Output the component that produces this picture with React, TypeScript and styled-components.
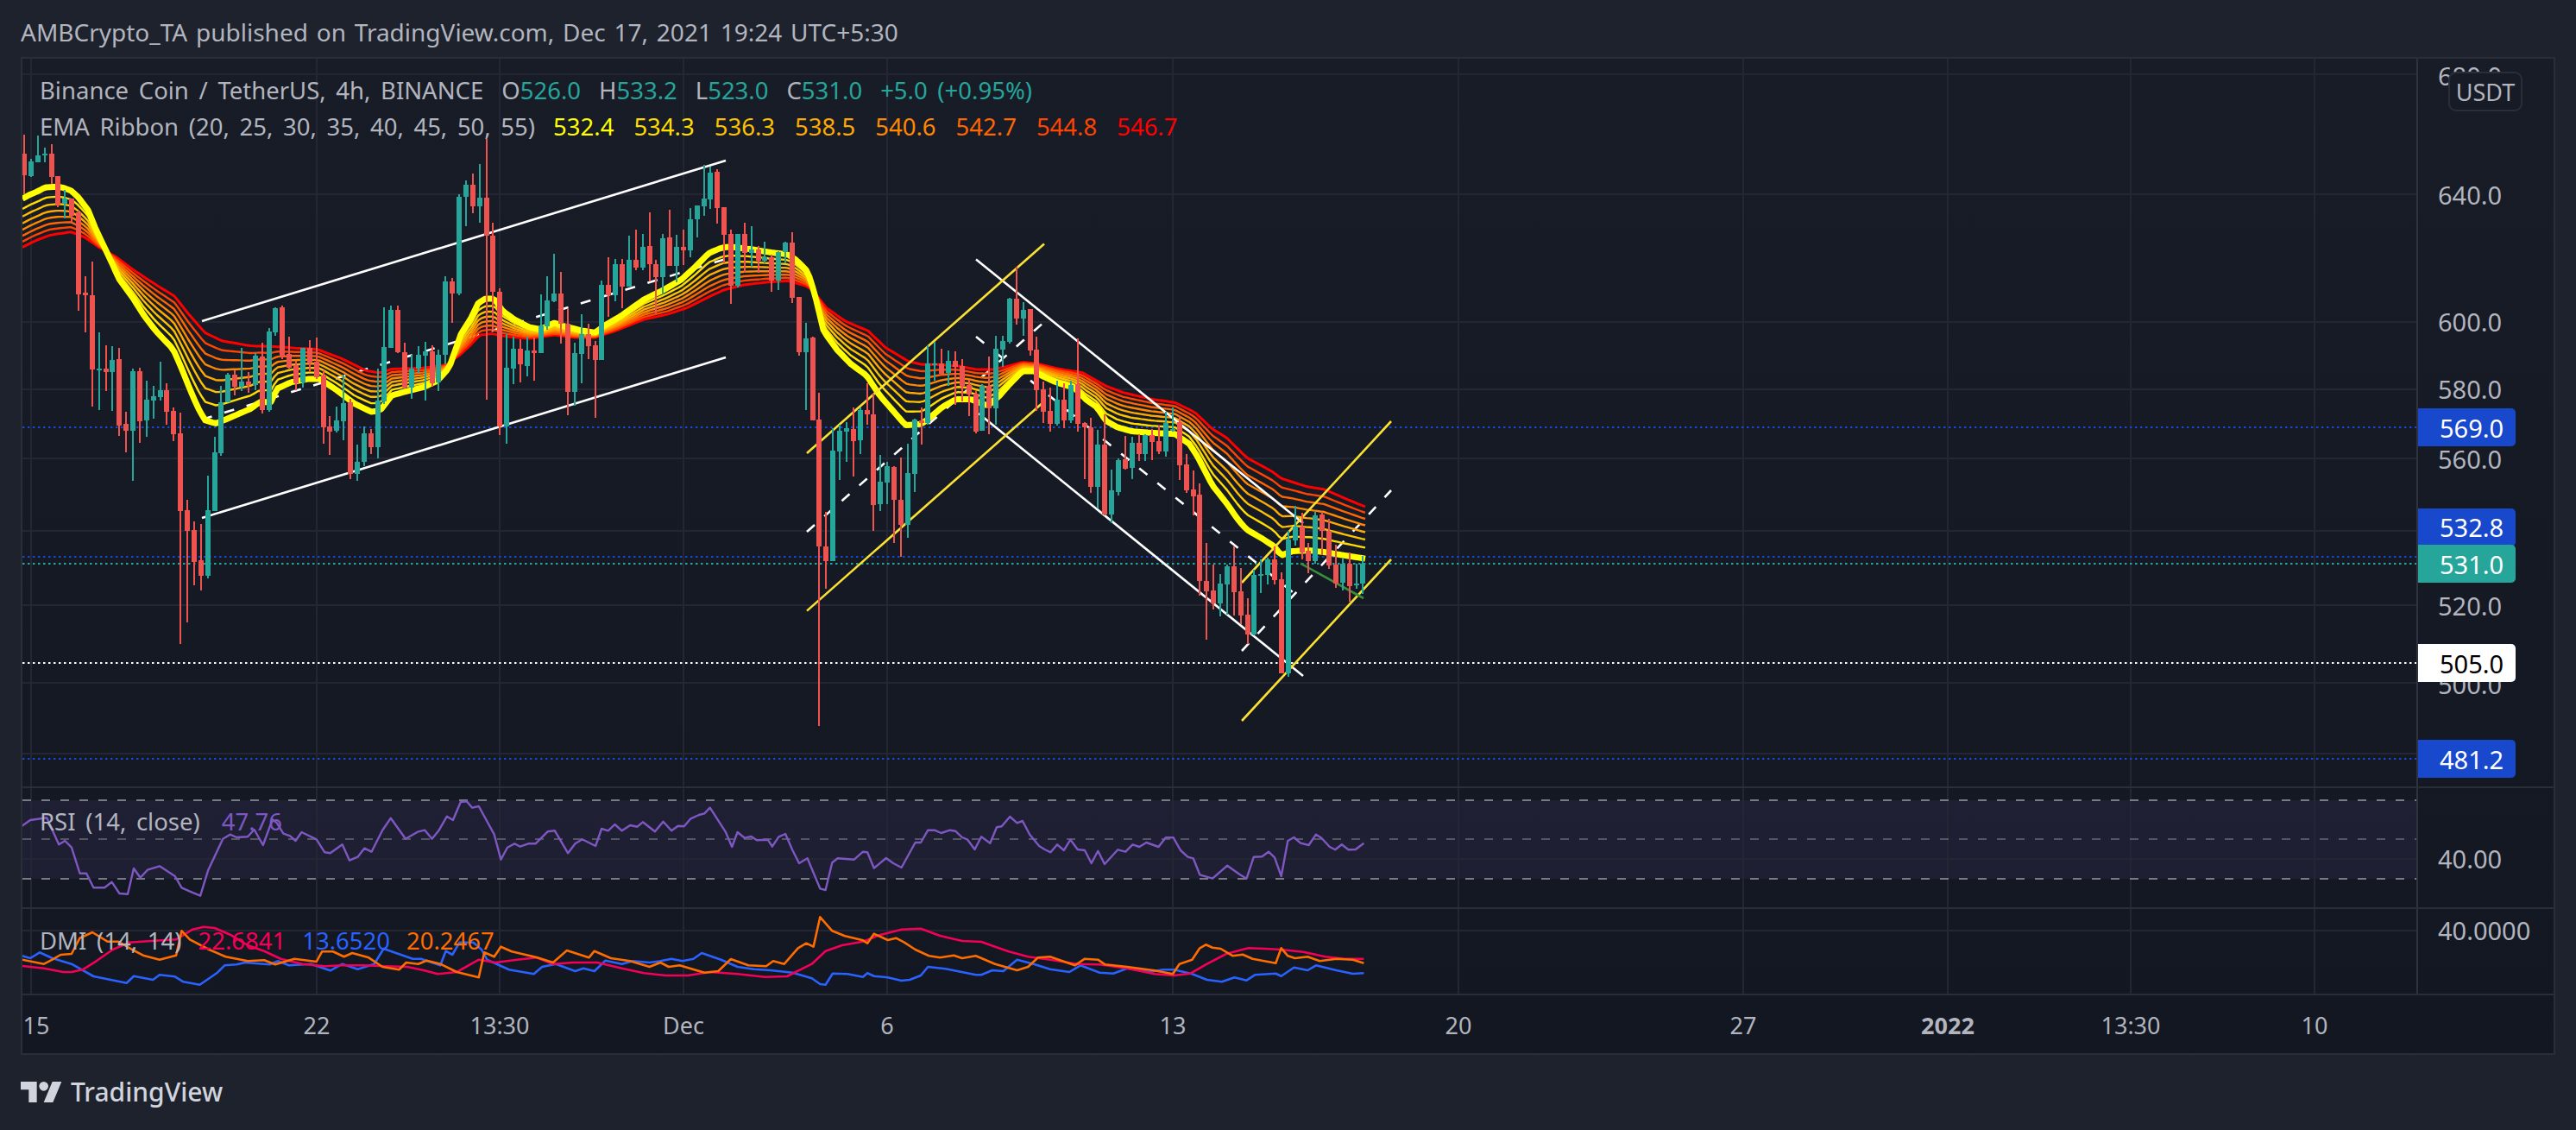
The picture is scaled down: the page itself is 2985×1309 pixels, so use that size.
import { createGlobalStyle, styled } from 'styled-components'

const GlobalStyle = createGlobalStyle`
  html, body {
    margin: 0;
    padding: 0;
    background: #1e222d;
  }
  body {
    font-family: "Noto Sans", "Open Sans", sans-serif;
    color: #b2b5be;
  }
`

type Pt = [number, number]
// hi, body top, body bottom, lo, 1 = up candle. Read off the chart in crop units.
type Candle = [number, number, number, number, number]

const UP = '#26a69a'
const DOWN = '#ef5350'
const BLUE = '#1848cc'
const YELLOW = '#fbe232'
const GRID = '#242733'

const PLOT_LEFT = 26
const PLOT_WIDTH = 2774

const crop = (pts: Pt[], ox: number, oy: number): Pt[] =>
  pts.map(([x, y]) => [ox + x / 3, oy + y / 2.613])

const zoomA = (pts: Pt[]): Pt[] => pts.map(([x, y]) => [x / 1.568, 900 + y / 3])
const zoomB = (pts: Pt[]): Pt[] => pts.map(([x, y]) => [1000 + x / 1.568, 900 + y / 3])

const toPoints = (pts: Pt[]) => pts.map(([x, y]) => `${x.toFixed(1)},${y.toFixed(1)}`).join(' ')

const candlesA: Candle[] = [
  [15,72,138,195,0],[90,97,142,145,1],[18,78,98,98,1],[55,72,78,100,1],[45,72,143,165,0],[140,140,228,235,0],
  [183,210,225,270,1],[208,208,260,285,0],[245,250,498,550,0],[445,494,502,615,0],[400,502,726,838,0],[615,723,727,848,1],
  [653,725,733,792,0],[657,698,733,851,1],[660,695,895,927,0],[855,892,912,976,0],[725,731,911,1063,1],[722,731,883,948,0],
  [760,818,880,930,1],[777,808,820,875,1],[703,790,810,820,1],[768,790,855,893,0],[842,852,922,942,0],[857,920,1155,1557,0],
  [1122,1152,1215,1491,0],[1185,1213,1309,1380,0],[1195,1304,1351,1395,0],[1048,1152,1352,1358,1],[930,977,1155,1155,1],[777,825,980,988,1],
  [738,741,825,825,1],[730,741,779,805,0],[662,764,779,792,1],[735,764,773,797,0],[678,685,773,788,1],[645,686,850,860,0],
  [600,612,850,855,1],[537,540,613,625,1],[532,537,687,695,0],[626,680,722,725,0],[700,713,768,788,0],[660,660,766,780,1],
  [638,660,708,735,0],[630,703,750,755,0],[730,745,902,950,0],[868,899,915,985,0],[838,881,912,916,1],[743,828,882,940,1],
  [815,826,1042,1057,0],[955,1005,1042,1063,1],[900,920,1005,1020,1],[908,920,962,983,0],[725,820,962,995,1],[538,659,824,830,1],
  [533,545,660,660,1],[533,545,674,678,0],[645,673,780,785,0],[682,725,780,815,1],[657,683,725,738,1],[642,672,685,820,1],
  [653,672,768,778,0],[667,683,765,793,1],[443,460,682,712,1],[450,460,497,585,0],[197,205,497,502,1],[155,168,205,293,1],
]

const candlesB: Candle[] = [
  [133,168,233,253,0],[105,206,233,282,1],[30,206,322,818,0],[283,322,490,610,0],[480,491,900,925,0],[620,722,898,950,1],
  [626,664,724,770,1],[635,664,712,765,0],[628,669,716,747,1],[630,669,677,760,0],[500,593,677,677,1],[445,517,597,607,1],
  [375,497,520,522,1],[432,497,587,648,0],[543,587,794,865,0],[645,677,794,835,1],[558,619,680,768,1],[588,619,656,695,0],
  [640,653,698,873,0],[457,471,697,697,1],[387,471,501,567,0],[392,408,501,520,1],[392,408,476,540,0],[322,395,476,476,1],
  [302,395,418,425,0],[317,355,418,425,1],[252,353,408,460,0],[395,408,447,557,0],[315,330,447,500,1],[243,327,413,413,0],
  [320,355,413,462,1],[302,355,365,410,0],[238,272,365,387,1],[230,230,273,327,1],[108,210,232,260,1],[112,130,211,240,1],
  [120,127,237,285,0],[235,235,319,405,0],[302,316,473,527,0],[315,315,473,478,1],[282,315,373,435,0],[292,362,373,415,1],
  [352,362,397,435,0],[340,388,398,405,1],[380,387,456,490,0],[368,372,456,485,1],[340,342,372,405,1],[312,342,510,525,0],
  [507,507,673,685,0],[586,632,673,848,1],[626,631,880,880,0],[798,878,1262,1806,0],[1158,1262,1307,1390,0],[905,972,1307,1307,1],
  [893,912,975,1060,1],[885,904,915,1005,1],[842,907,943,1050,0],[842,850,941,983,1],[768,850,861,893,0],[800,862,1136,1214,0],
  [985,1067,1134,1155,1],[1005,1020,1068,1135,1],[1018,1022,1120,1252,0],[993,1120,1197,1293,0],[952,1040,1197,1235,1],[875,878,1042,1097,1],
]

const candlesC: Candle[] = [
  [580,618,628,692,0],[392,447,628,632,1],[382,447,452,500,1],[403,447,478,483,0],[408,440,475,514,1],[410,440,457,572,0],
  [435,455,515,563,0],[497,512,540,605,0],[530,537,652,658,0],[510,515,650,650,1],[427,516,583,660,0],[363,403,583,632,1],
  [363,380,405,457,1],[247,250,382,388,1],[155,252,310,328,0],[262,285,310,362,1],[282,282,408,422,0],[366,405,527,590,0],
  [502,525,592,627,0],[520,591,630,652,0],[498,557,630,635,1],[508,557,618,642,0],[500,512,620,628,1],[372,510,630,652,0],
  [625,627,640,797,0],[612,640,820,840,0],[648,693,820,885,1],[602,693,903,908,0],[768,831,903,930,1],[735,740,835,847,1],
  [667,737,765,768,0],[670,687,764,797,1],[662,687,720,742,0],[660,665,720,742,1],[645,665,685,740,0],[635,682,713,722,0],
  [592,628,713,728,1],[580,646,650,652,1],[607,625,755,800,0],[720,753,832,840,0],[772,828,848,907,0],[810,845,1105,1150,0],
  [990,1105,1137,1282,0],[1055,1133,1172,1192,0],[1085,1113,1172,1213,1],[1055,1062,1115,1207,1],[1002,1062,1138,1210,0],[1067,1137,1210,1237,0],
  [1158,1207,1266,1297,0],[1072,1087,1268,1270,1],[1040,1085,1089,1142,1],[1035,1040,1087,1115,1],[1002,1040,1103,1115,0],[1078,1100,1385,1385,0],
  [955,980,1385,1395,1],[878,940,983,998,1],[900,940,1018,1040,0],[990,1015,1045,1082,0],[895,907,1045,1052,1],[897,903,955,1028,0],
  [918,953,1057,1068,0],[995,1055,1113,1125,0],[1038,1052,1110,1133,1],[1018,1052,1120,1167,0],[1052,1112,1118,1128,1],[1030,1052,1113,1145,1],
]

const candleY = (v: number, base: number) => base + v / 2.613

const candles = [
  ...candlesA.map((c) => ({ c, base: 150 })),
  ...candlesB.map((c) => ({ c, base: 150 })),
  ...candlesC.map((c) => ({ c, base: 250 })),
]

// EMA 20 and EMA 55 are read off the chart, the six between are fanned out from them
const ema20: Pt[] = [
  ...crop([[5,210],[30,198],[60,187],[85,175],[130,173],[150,177],[175,185],[200,205],[235,245],[260,300],[290,355],[315,400],[340,450],[390,510],[430,565],[470,610],[530,665],[560,725],[590,790],[615,840],[640,880],[680,890],[720,875],[800,845],[830,825],[870,825],[890,785],[940,765],[1000,755],[1040,755],[1100,790],[1160,830],[1220,855],[1250,850],[1290,805],[1330,795],[1400,780],[1450,760],[1490,720],[1530,620]], 24, 150),
  ...crop([[0,570],[25,525],[50,512],[80,512],[110,550],[150,575],[200,598],[240,605],[290,585],[320,595],[380,608],[430,615],[470,590],[520,565],[600,515],[670,485],[730,455],[780,415],[825,375],[870,358],[900,355],[970,362],[1040,372],[1100,378],[1130,395],[1170,430],[1195,500],[1225,610],[1270,665],[1320,710],[1375,745],[1420,805],[1470,855],[1510,895]], 546, 150),
  ...crop([[0,630],[30,610],[70,580],[120,555],[170,555],[230,575],[270,545],[300,515],[350,470],[390,470],[420,485],[470,505],[530,520],[570,555],[610,580],[640,620],[680,640],[730,652],[800,657],[880,660],[930,690],[960,730],[1010,815],[1060,870],[1100,920],[1130,950],[1180,975],[1225,1000],[1250,1028],[1290,1015],[1350,1013],[1400,1018],[1470,1028],[1545,1038]], 1068, 250),
]

const ema55: Pt[] = [
  ...crop([[5,357],[50,337],[100,320],[175,310],[220,325],[270,355],[330,385],[400,430],[470,470],[535,505],[580,555],[640,615],[700,640],[800,655],[880,657],[960,662],[1030,665],[1120,695],[1200,730],[1250,737],[1290,725],[1400,722],[1480,712],[1530,680]], 24, 150),
  ...crop([[0,650],[30,622],[70,618],[110,625],[200,633],[290,622],[360,630],[430,630],[500,610],[600,575],[680,560],[750,540],[830,505],[880,485],[950,470],[1030,462],[1100,458],[1170,475],[1195,495],[1235,540],[1300,580],[1380,610],[1440,660],[1520,702]], 546, 150),
  ...crop([[0,450],[60,450],[130,455],[190,465],[250,465],[300,455],[350,443],[400,447],[470,462],[560,475],[640,515],[700,535],[800,555],[880,565],[950,595],[1010,645],[1060,672],[1130,732],[1220,775],[1250,795],[1340,820],[1400,828],[1470,855],[1540,880]], 1068, 250),
]

const ribbonColors = ['#ffff00', '#ffdd00', '#fcc200', '#ffaa00', '#ff8800', '#ff6600', '#ff4400', '#ff0000']

const sampleAt = (curve: Pt[], x: number) => {
  if (x <= curve[0][0]) return curve[0][1]
  for (let i = 1; i < curve.length; i++) {
    if (x <= curve[i][0]) {
      const [x0, y0] = curve[i - 1]
      const [x1, y1] = curve[i]
      return y0 + ((x - x0) / (x1 - x0)) * (y1 - y0)
    }
  }
  return curve[curve.length - 1][1]
}

const ribbon = ribbonColors.map((color, k) => {
  const t = Math.pow(k / 7, 0.8)
  const pts: Pt[] = []
  for (let x = 26; x <= 1584; x += 4) {
    const a = sampleAt(ema20, x)
    const b = sampleAt(ema55, x)
    pts.push([x, a + (b - a) * t])
  }
  return { color, width: k === 0 ? 7 : k === 7 ? 3 : 2.4, points: toPoints(pts) }
}).reverse()

type Seg = [number, number, number, number]

const dashedChannels: Seg[] = [
  [234, 486, 841, 300],
  [935, 616, 1210, 373],
  [1131, 390, 1508, 694],
  [1439, 754, 1612, 568],
]

const whiteChannels: Seg[] = [
  [234, 372, 841, 186],
  [234, 600, 841, 414],
  [1131, 300.5, 1510, 606],
  [1134, 479, 1510, 783],
]

const yellowChannels: Seg[] = [
  [935, 525, 1210, 282.5],
  [935, 707.6, 1210, 465],
  [1439, 675, 1612, 488],
  [1439, 835, 1612, 648],
]

const priceLines = [
  { y: 495, color: BLUE },
  { y: 645, color: BLUE },
  { y: 653, color: UP },
  { y: 768, color: '#ffffff' },
  { y: 879, color: BLUE },
]

const verticalGrid = [36, 367, 579, 792, 1028, 1359, 1690, 2020, 2257, 2469, 2682]
const mainGrid = [86, 225, 373, 451, 531, 615, 701, 791, 873]

const rsiLine: Pt[] = [
  ...zoomA([[40,170],[55,150],[85,142],[107,235],[118,222],[130,245],[145,335],[157,335],[170,385],[190,385],[203,365],[217,405],[232,407],[243,318],[255,350],[268,323],[290,310],[318,345],[330,385],[345,398],[364,413],[378,325],[405,215],[418,200],[430,210],[450,208],[462,183],[478,237],[495,148],[503,160],[515,197],[527,205],[537,222],[548,192],[575,217],[590,262],[600,265],[622,235],[635,290],[650,278],[662,248],[675,260],[695,185],[710,143],[737,215],[760,190],[772,185],[785,215],[797,187],[812,137],[823,150],[837,87],[848,85],[858,107],[870,102],[898,200],[910,287],[922,245],[935,232],[945,242],[960,232],[973,232],[995,190],[1008,187],[1032,265],[1045,232],[1058,217],[1082,240],[1093,180],[1105,187],[1117,165],[1130,187],[1145,168],[1158,173],[1168,157],[1190,190],[1205,155],[1220,187],[1232,170],[1243,172],[1255,145],[1270,132],[1280,127],[1290,107],[1318,190],[1330,243],[1340,192],[1353,212],[1365,207],[1375,220],[1395,218],[1403,242],[1415,208],[1427,198],[1440,255],[1452,300],[1467,283],[1490,388],[1500,393],[1512,298],[1522,283],[1552,287]]),
  ...zoomB([[0,260],[8,262],[20,317],[42,282],[55,300],[70,315],[95,228],[105,228],[118,185],[130,185],[142,195],[158,185],[168,188],[180,210],[190,218],[203,252],[215,208],[231,230],[243,175],[252,172],[267,138],[280,160],[290,153],[303,200],[320,240],[330,252],[341,262],[353,235],[365,255],[377,218],[390,252],[403,255],[415,300],[427,257],[439,303],[463,253],[477,260],[490,235],[502,243],[515,228],[537,243],[550,211],[564,211],[577,255],[590,278],[600,283],[612,340],[635,353],[662,308],[685,340],[697,353],[710,278],[725,277],[737,260],[748,280],[760,345],[772,222],[783,210],[795,230],[810,237],[823,200],[833,212],[848,243],[858,253],[870,235],[882,253],[895,252],[910,230]]),
]

const dmiPlus: Pt[] = [
  ...zoomA([[40,657],[80,665],[115,678],[130,678],[150,670],[175,640],[205,600],[235,575],[275,570],[320,565],[350,530],[370,521],[390,525],[420,550],[450,585],[480,605],[510,632],[550,650],[590,658],[620,655],[660,655],[700,658],[740,660],[770,672],[795,685],[830,678],[870,635],[900,645],[940,635],[975,628],[1005,650],[1040,645],[1085,645],[1130,665],[1170,682],[1210,690],[1250,690],[1290,678],[1340,685],[1390,695],[1430,693],[1475,650],[1500,605],[1530,585]]),
  ...zoomB([[0,572],[30,550],[70,530],[105,527],[140,552],[180,570],[215,573],[240,590],[265,607],[300,625],[340,635],[390,650],[430,652],[480,665],[530,685],[565,690],[595,683],[625,650],[660,615],[700,595],[730,597],[760,600],[800,608],[840,625],[875,632],[910,632]]),
]

const dmiMinus: Pt[] = [
  ...zoomA([[40,622],[55,630],[72,610],[95,630],[130,650],[170,693],[230,716],[243,692],[278,705],[290,688],[318,694],[333,712],[363,722],[395,680],[408,655],[430,652],[445,645],[490,652],[505,640],[525,655],[565,650],[600,673],[622,650],[650,668],[680,650],[697,597],[750,632],[765,632],[800,655],[810,605],[822,618],[835,575],[860,575],[875,600],[885,635],[925,670],[970,685],[985,660],[1010,650],[1045,675],[1060,665],[1080,675],[1100,638],[1130,650],[1150,640],[1180,645],[1200,640],[1220,632],[1240,640],[1260,632],[1275,612],[1310,635],[1340,660],[1370,668],[1400,672],[1440,680],[1475,700],[1490,720],[1500,722],[1513,683],[1540,685]]),
  ...zoomB([[0,695],[8,682],[20,692],[45,697],[70,708],[85,705],[105,690],[118,660],[150,667],[205,688],[215,688],[235,672],[255,675],[280,635],[310,650],[340,668],[375,678],[395,655],[430,680],[455,683],[480,665],[520,678],[545,670],[565,670],[598,685],[625,705],[652,712],[675,697],[697,707],[712,688],[750,683],[760,692],[783,662],[808,672],[823,655],[860,672],[890,684],[910,682]]),
]

const adxLine: Pt[] = [
  ...zoomA([[40,635],[80,650],[95,635],[110,618],[130,615],[145,560],[168,540],[195,572],[215,572],[240,600],[260,620],[290,635],[320,620],[330,535],[345,565],[380,600],[410,625],[450,640],[480,637],[500,652],[535,632],[575,642],[585,607],[605,607],[625,625],[640,612],[670,628],[695,660],[725,670],[738,645],[760,650],[775,638],[800,650],[830,678],[870,697],[880,610],[898,625],[910,590],[930,607],[975,627],[1005,645],[1030,603],[1070,628],[1080,605],[1110,630],[1145,640],[1180,660],[1200,645],[1215,660],[1235,655],[1280,680],[1305,675],[1328,633],[1360,655],[1392,658],[1405,640],[1425,650],[1450,595],[1465,578],[1478,590],[1490,487],[1512,535],[1535,553]]),
  ...zoomB([[0,568],[8,578],[20,545],[45,567],[60,560],[75,575],[95,600],[120,622],[140,628],[165,620],[180,630],[205,622],[240,650],[280,672],[300,660],[318,628],[340,625],[385,655],[403,632],[427,635],[440,652],[480,660],[530,673],[563,685],[575,650],[598,635],[612,595],[623,583],[635,593],[650,597],[672,622],[690,617],[708,632],[750,647],[760,595],[772,622],[785,630],[808,625],[830,640],[860,632],[890,635],[910,647]]),
]

const scaleLabels = [
  { text: '680.0', y: 88 },
  { text: '640.0', y: 226 },
  { text: '600.0', y: 373 },
  { text: '580.0', y: 451 },
  { text: '560.0', y: 532 },
  { text: '520.0', y: 702 },
  { text: '500.0', y: 793 },
]

const priceTags = [
  { text: '569.0', y: 495, bg: BLUE, fg: '#ffffff' },
  { text: '532.8', y: 610.5, bg: BLUE, fg: '#ffffff' },
  { text: '531.0', y: 653, bg: UP, fg: '#ffffff' },
  { text: '505.0', y: 768, bg: '#ffffff', fg: '#000000' },
  { text: '481.2', y: 879, bg: BLUE, fg: '#ffffff' },
]

const timeLabels = [
  { text: '15', x: 42 },
  { text: '22', x: 367 },
  { text: '13:30', x: 579 },
  { text: 'Dec', x: 792 },
  { text: '6', x: 1028 },
  { text: '13', x: 1359 },
  { text: '20', x: 1690 },
  { text: '27', x: 2020 },
  { text: '2022', x: 2257, bold: true },
  { text: '13:30', x: 2469 },
  { text: '10', x: 2682 },
]

const emaValues = ['532.4', '534.3', '536.3', '538.5', '540.6', '542.7', '544.8', '546.7']

const VerticalGrid = ({ y1, y2 }: { y1: number; y2: number }) => (
  <>
    {verticalGrid.map((x) => (
      <line key={x} x1={x} x2={x} y1={y1} y2={y2} stroke={GRID} strokeWidth="2" />
    ))}
  </>
)

const Segments = ({ segs, color, dash }: { segs: Seg[]; color: string; dash?: string }) => (
  <>
    {segs.map(([x1, y1, x2, y2]) => (
      <line
        key={`${x1}-${y1}`}
        x1={x1}
        y1={y1}
        x2={x2}
        y2={y2}
        stroke={color}
        strokeWidth="2.6"
        strokeDasharray={dash}
      />
    ))}
  </>
)

const MainChart = () => (
  <Plot viewBox={`${PLOT_LEFT} 68 ${PLOT_WIDTH} 843`} width={PLOT_WIDTH} height={843}>
    <VerticalGrid y1={68} y2={911} />
    {mainGrid.map((y) => (
      <line key={y} x1={PLOT_LEFT} x2={2800} y1={y} y2={y} stroke={GRID} strokeWidth="2" />
    ))}
    {priceLines.map((l) => (
      <line key={l.y} x1={PLOT_LEFT} x2={2800} y1={l.y} y2={l.y} stroke={l.color} strokeWidth="2" strokeDasharray="2.5 3.5" />
    ))}
    <Segments segs={dashedChannels} color="#ffffff" dash="12 15" />
    {ribbon.map((r) => (
      <polyline key={r.color} points={r.points} fill="none" stroke={r.color} strokeWidth={r.width} strokeLinejoin="round" />
    ))}
    <Segments segs={whiteChannels} color="#ffffff" />
    <Segments segs={yellowChannels} color={YELLOW} />
    <line x1={1507} y1={652.6} x2={1580} y2={693} stroke="#388e3c" strokeWidth="2.6" />
    {candles.map(({ c: [hi, top, bot, lo, up], base }, i) => {
      const x = 28 + i * 7.875
      const color = up ? UP : DOWN
      const bodyTop = candleY(top, base)
      return (
        <g key={i} fill={color} shapeRendering="crispEdges">
          <rect x={x - 1} y={candleY(hi, base)} width={2} height={(lo - hi) / 2.613} />
          <rect x={x - 3} y={bodyTop} width={6} height={Math.max((bot - top) / 2.613, 2)} />
        </g>
      )
    })}
  </Plot>
)

const RsiChart = () => (
  <Plot viewBox={`${PLOT_LEFT} 913 ${PLOT_WIDTH} 138`} width={PLOT_WIDTH} height={138}>
    <rect x={PLOT_LEFT} y={927} width={PLOT_WIDTH} height={91} fill="#7e57c2" fillOpacity="0.11" />
    <VerticalGrid y1={913} y2={1051} />
    <line x1={PLOT_LEFT} x2={2800} y1={995} y2={995} stroke={GRID} strokeWidth="2" />
    <line x1={PLOT_LEFT} x2={2800} y1={927} y2={927} stroke="#787b86" strokeWidth="2" strokeDasharray="10 12" />
    <line x1={PLOT_LEFT} x2={2800} y1={972} y2={972} stroke="#787b86" strokeOpacity="0.6" strokeWidth="2" strokeDasharray="10 12" />
    <line x1={PLOT_LEFT} x2={2800} y1={1018} y2={1018} stroke="#787b86" strokeWidth="2" strokeDasharray="10 12" />
    <polyline points={toPoints(rsiLine)} fill="none" stroke="#7e57c2" strokeWidth="2.4" strokeLinejoin="round" />
  </Plot>
)

const DmiChart = () => (
  <Plot viewBox={`${PLOT_LEFT} 1053 ${PLOT_WIDTH} 98`} width={PLOT_WIDTH} height={98}>
    <VerticalGrid y1={1053} y2={1151} />
    <line x1={PLOT_LEFT} x2={2800} y1={1078} y2={1078} stroke={GRID} strokeWidth="2" />
    <polyline points={toPoints(dmiMinus)} fill="none" stroke="#2962ff" strokeWidth="2.6" strokeLinejoin="round" />
    <polyline points={toPoints(dmiPlus)} fill="none" stroke="#f50057" strokeWidth="2.6" strokeLinejoin="round" />
    <polyline points={toPoints(adxLine)} fill="none" stroke="#ff6d00" strokeWidth="2.6" strokeLinejoin="round" />
  </Plot>
)

const TradingViewMark = () => (
  <svg width="48" height="24" viewBox="0 4 36 18" fill="#d1d4dc">
    <path d="M14 22H7V11H0V4h14v18z" />
    <circle cx="20" cy="8" r="4" />
    <path d="M28 22h-8l7.5-18h8L28 22z" />
  </svg>
)

const App = () => {
  return (
    <Page>
      <GlobalStyle />
      <Header>AMBCrypto_TA published on TradingView.com, Dec 17, 2021 19:24 UTC+5:30</Header>
      <ChartFrame>
        <PaneRow $height={843}>
          <PlotArea>
            <MainChart />
            <Legend $top={17}>
              <LegendRow>
                <span>Binance Coin / TetherUS, 4h, BINANCE</span>
                <LegendRow>
                  <span>O<Value $color={UP}>526.0</Value></span>
                  <span>H<Value $color={UP}>533.2</Value></span>
                  <span>L<Value $color={UP}>523.0</Value></span>
                  <span>C<Value $color={UP}>531.0</Value></span>
                  <Value $color={UP}>+5.0 (+0.95%)</Value>
                </LegendRow>
              </LegendRow>
              <LegendRow>
                <span>EMA Ribbon (20, 25, 30, 35, 40, 45, 50, 55)</span>
                <LegendRow $gap={23}>
                  {emaValues.map((v, i) => (
                    <Value key={v} $color={ribbonColors[i]}>{v}</Value>
                  ))}
                </LegendRow>
              </LegendRow>
            </Legend>
          </PlotArea>
          <PriceAxis>
            {scaleLabels.map((l) => (
              <ScaleLabel key={l.text} $y={l.y - 68}>{l.text}</ScaleLabel>
            ))}
            <CurrencyBox>USDT</CurrencyBox>
            {priceTags.map((t) => (
              <PriceTag key={t.text} $y={t.y - 68} $bg={t.bg} $fg={t.fg}>{t.text}</PriceTag>
            ))}
          </PriceAxis>
        </PaneRow>
        <PaneRow $height={138} $divided>
          <PlotArea>
            <RsiChart />
            <Legend $top={19}>
              <LegendRow $gap={25}>
                <span>RSI (14, close)</span>
                <Value $color="#7e57c2">47.76</Value>
              </LegendRow>
            </Legend>
          </PlotArea>
          <PriceAxis>
            <ScaleLabel $y={82}>40.00</ScaleLabel>
          </PriceAxis>
        </PaneRow>
        <PaneRow $height={98} $divided>
          <PlotArea>
            <DmiChart />
            <Legend $top={17}>
              <LegendRow $gap={19}>
                <span>DMI (14, 14)</span>
                <Value $color="#f50057">22.6841</Value>
                <Value $color="#2962ff">13.6520</Value>
                <Value $color="#ff6d00">20.2467</Value>
              </LegendRow>
            </Legend>
          </PlotArea>
          <PriceAxis>
            <ScaleLabel $y={25}>40.0000</ScaleLabel>
          </PriceAxis>
        </PaneRow>
        <TimeAxis>
          {timeLabels.map((l) => (
            <TimeLabel key={`${l.text}-${l.x}`} $x={l.x - PLOT_LEFT} $bold={l.bold}>{l.text}</TimeLabel>
          ))}
        </TimeAxis>
      </ChartFrame>
      <Footer>
        <TradingViewMark />
        <Wordmark>TradingView</Wordmark>
      </Footer>
    </Page>
  )
}

const Page = styled.div`
  width: 2985px;
  height: 1309px;
  overflow: hidden;
  background: #1e222d;
  padding: 0 0 0 24px;
  box-sizing: border-box;
`

const Header = styled.div`
  height: 66px;
  display: flex;
  align-items: center;
  padding-top: 8px;
  box-sizing: border-box;
  font-size: 28px;
  word-spacing: 2.5px;
  color: #b2b5be;
  white-space: nowrap;
`

const ChartFrame = styled.div`
  width: 2937px;
  box-sizing: border-box;
  border: 2px solid #2a2e39;
  background: linear-gradient(180deg, #181c27 0%, #131722 100%);
`

const PaneRow = styled.div<{ $height: number; $divided?: boolean }>`
  display: flex;
  box-sizing: content-box;
  height: ${(p) => p.$height}px;
  border-top: ${(p) => (p.$divided ? '2px solid #2a2e39' : 'none')};
`

const PlotArea = styled.div`
  position: relative;
  flex: 0 0 2774px;
  overflow: hidden;
`

const Plot = styled.svg`
  display: block;
`

const Legend = styled.div<{ $top: number }>`
  position: absolute;
  left: 20px;
  top: ${(p) => p.$top}px;
  display: flex;
  flex-direction: column;
  gap: 2px;
  font-size: 27.5px;
  line-height: 40px;
  word-spacing: 4.5px;
  color: #b2b5be;
  white-space: nowrap;
`

const LegendRow = styled.div<{ $gap?: number }>`
  display: flex;
  gap: ${(p) => p.$gap ?? 21}px;
`

const Value = styled.span<{ $color: string }>`
  color: ${(p) => p.$color};
`

const PriceAxis = styled.div`
  position: relative;
  flex: 1;
  border-left: 2px solid #2f3340;
  overflow: hidden;
`

const ScaleLabel = styled.div<{ $y: number }>`
  position: absolute;
  left: 23px;
  top: ${(p) => p.$y}px;
  transform: translateY(-50%);
  font-size: 29px;
  line-height: 40px;
  color: #b2b5be;
`

const CurrencyBox = styled.div`
  position: absolute;
  left: 35px;
  top: 15px;
  width: 86px;
  height: 46px;
  box-sizing: border-box;
  display: flex;
  align-items: center;
  justify-content: center;
  border: 2px solid #2a2e39;
  border-radius: 9px;
  background: #171b26;
  font-size: 27px;
  color: #b2b5be;
`

const PriceTag = styled.div<{ $y: number; $bg: string; $fg: string }>`
  position: absolute;
  left: -2px;
  top: ${(p) => p.$y}px;
  transform: translateY(-50%);
  width: 115px;
  height: 44px;
  box-sizing: border-box;
  padding-left: 27px;
  display: flex;
  align-items: center;
  border-radius: 0 5px 5px 0;
  background: ${(p) => p.$bg};
  color: ${(p) => p.$fg};
  font-size: 29px;
`

const TimeAxis = styled.div`
  position: relative;
  height: 67px;
  border-top: 2px solid #2a2e39;
  overflow: hidden;
`

const TimeLabel = styled.div<{ $x: number; $bold?: boolean }>`
  position: absolute;
  left: ${(p) => p.$x}px;
  top: 50%;
  transform: translate(-50%, -50%);
  font-size: 27px;
  font-weight: ${(p) => (p.$bold ? 700 : 400)};
  color: #b2b5be;
`

const Footer = styled.div`
  display: flex;
  align-items: center;
  gap: 10px;
  margin-top: 27px;
`

const Wordmark = styled.div`
  font-size: 30px;
  font-weight: 500;
  color: #d1d4dc;
  line-height: 32px;
`

export default App
